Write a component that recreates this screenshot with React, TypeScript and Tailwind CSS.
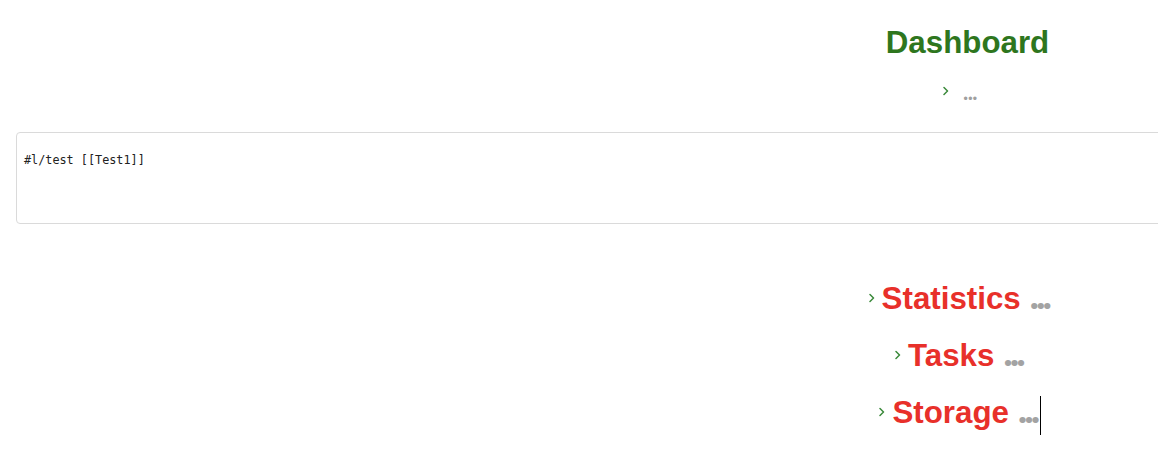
import React from "react";

const Chevron = ({ className = "" }: { className?: string }) => (
  <svg width="6" height="10" viewBox="0 0 6 10" className={className}>
    <polyline points="1,1.5 4.5,5 1,8.5" fill="none" stroke="#3b8a3b" strokeWidth="1.5" strokeLinecap="round" strokeLinejoin="round" />
  </svg>
);

const Row = ({ title, caret = false }: { title: string; caret?: boolean }) => (
  <div className="flex items-center h-[57px]">
    <Chevron className="mr-[7px] -mt-[2px]" />
    <span className="text-[31.3px] font-bold text-[#e8302a] leading-[36px]">{title}</span>
    <span
      className="ml-[9px] -mt-[10px] text-[38px] font-black text-[#a3a3a3] leading-none tracking-[-2.5px]"
      style={{ fontFamily: 'Lato, "Liberation Sans", sans-serif' }}
    >
      ...
    </span>
    {caret ? <span className="w-px h-[39px] bg-black mt-[6px] ml-[2px]" /> : <span className="w-[2px]" />}
  </div>
);

export default function App() {
  return (
    <div className="w-full h-[458px] overflow-hidden bg-white" style={{ fontFamily: '"Liberation Sans", Arial, sans-serif' }}>
      <div className="w-[1920px]">
        <div className="flex flex-col items-center pt-[25px]">
          <h1 className="pl-[15px] text-[31.3px] font-bold text-[#2e761e] leading-[36px]">Dashboard</h1>
          <div className="flex items-center mt-[20px] h-[20px]">
            <Chevron />
            <span
              className="ml-[14px] mt-[1px] text-[22px] font-bold text-[#a0a0a0] leading-[16px] tracking-[-0.5px]"
              style={{ fontFamily: 'Lato, "Liberation Sans", sans-serif' }}
            >
              ...
            </span>
          </div>
        </div>
        <div className="mx-[16px] mt-[31px] h-[92px] rounded-[4px] border border-[#dadada] px-[7px] pt-[19px]">
          <div className="text-[11.8px] text-[#222]" style={{ fontFamily: '"DejaVu Sans Mono", "Liberation Mono", monospace' }}>
            #l/test [[Test1]]
          </div>
        </div>
        <div className="flex flex-col items-center mt-[46px]">
          <Row title="Statistics" />
          <Row title="Tasks" />
          <Row title="Storage" caret />
        </div>
      </div>
    </div>
  );
}
